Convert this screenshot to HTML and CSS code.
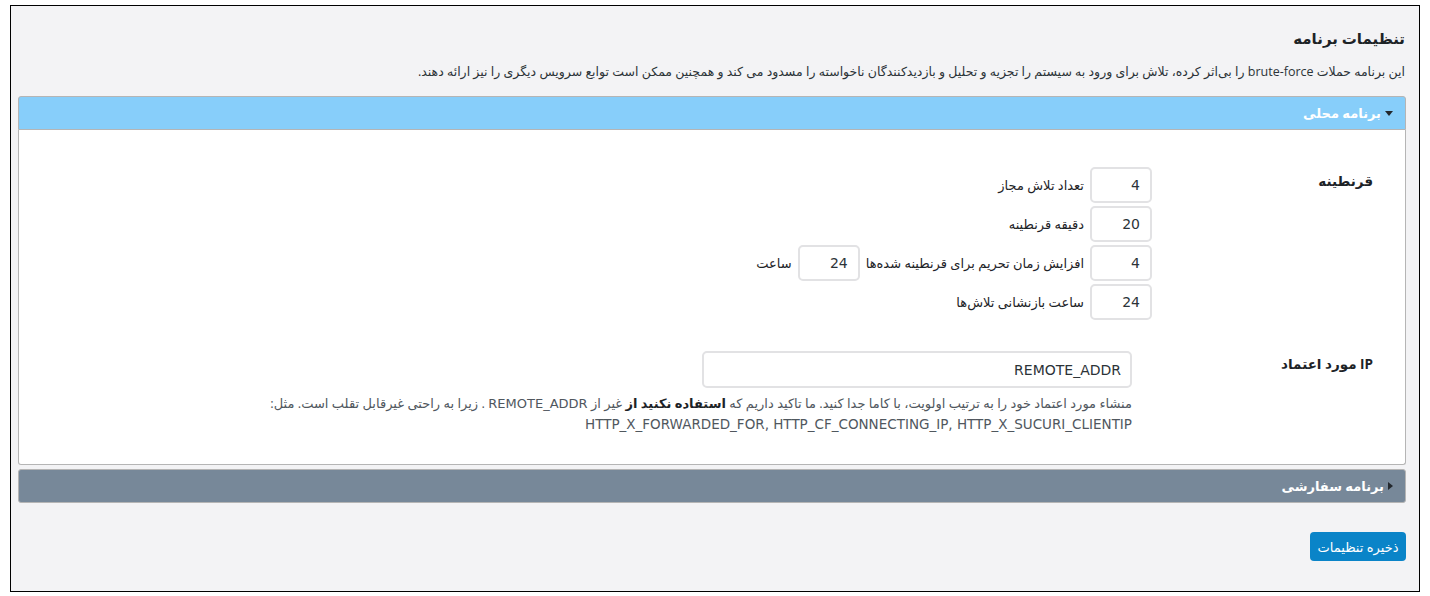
FILE: index.html
```html
<!DOCTYPE html>
<html lang="fa" dir="rtl">
<head>
<meta charset="utf-8">
<title>تنظیمات برنامه</title>
<link rel="stylesheet" href="styles.css">
</head>
<body>
<div class="wrap">
  <h1 class="title">تنظیمات برنامه</h1>
  <p class="desc">این برنامه حملات brute-force را بی‌اثر کرده، تلاش برای ورود به سیستم را تجزیه و تحلیل و بازدیدکنندگان ناخواسته را مسدود می کند و همچنین ممکن است توابع سرویس دیگری را نیز ارائه دهند.</p>

  <div class="panel panel-open">
    <div class="panel-head head-blue">
      <svg class="caret" width="8" height="5" viewBox="0 0 8 5"><path d="M0 0H8L4 5Z" fill="#23282d"/></svg>
      <span>برنامه محلی</span>
    </div>
    <div class="panel-body">
      <div class="row">
        <div class="label">قرنطینه</div>
        <div class="field">
          <div class="line"><input class="num" type="text" value="4"><span class="txt">تعداد تلاش مجاز</span></div>
          <div class="line"><input class="num" type="text" value="20"><span class="txt">دقیقه قرنطینه</span></div>
          <div class="line"><input class="num" type="text" value="4"><span class="txt">افزایش زمان تحریم برای قرنطینه شده‌ها</span><input class="num" type="text" value="24"><span class="txt">ساعت</span></div>
          <div class="line"><input class="num" type="text" value="24"><span class="txt">ساعت بازنشانی تلاش‌ها</span></div>
        </div>
      </div>
      <div class="row row-ip">
        <div class="label">IP مورد اعتماد</div>
        <div class="field field-ip">
          <input class="wide" type="text" value="REMOTE_ADDR">
          <p class="help">منشاء مورد اعتماد خود را به ترتیب اولویت، با کاما جدا کنید. ما تاکید داریم که <b>استفاده نکنید از</b> غیر از <span class="lat">REMOTE_ADDR</span> . زیرا به راحتی غیرقابل تقلب است. مثل:<br><span class="lat lat-list">HTTP_X_FORWARDED_FOR, HTTP_CF_CONNECTING_IP, HTTP_X_SUCURI_CLIENTIP</span></p>
        </div>
      </div>
    </div>
  </div>

  <div class="panel panel-closed">
    <div class="panel-head head-grey">
      <svg class="caret" width="5" height="8" viewBox="0 0 5 8"><path d="M0 0V8L5 4Z" fill="#23282d"/></svg>
      <span>برنامه سفارشی</span>
    </div>
  </div>

  <div class="actions">
    <button class="save" type="button">ذخیره تنظیمات</button>
  </div>
</div>
</body>
</html>
```
FILE: styles.css
```css
* { box-sizing: border-box; }
html, body { margin: 0; padding: 0; background: #fff; }
body {
  font-family: "Open Sans", "DejaVu Sans", sans-serif;
  color: #1d2327;
  font-size: 13px;
}
.wrap {
  margin: 5px 10px 0 10px;
  height: 587px;
  border: 1px solid #000;
  background: #f3f3f5;
  padding: 0 13px 0 7px;
}
.title {
  margin: 0;
  padding-top: 20px;
  font-size: 15px;
  font-weight: bold;
  line-height: 24px;
  color: #1d2327;
  padding-right: 1px;
}
.desc {
  margin: 12px 0 0 0;
  line-height: 20px;
  font-size: 12.5px;
  color: #2c3338;
  padding-right: 1px;
}
.panel { margin-top: 14px; }
.panel-closed { margin-top: 4px; }
.panel-head {
  height: 34px;
  border: 1px solid #b5b5b5;
  border-radius: 3px 3px 0 0;
  display: flex;
  align-items: center;
  padding-right: 12px;
  gap: 4px;
  color: #fff;
  font-weight: bold;
  font-size: 13px;
}
.head-blue { background: #87cefa; }
.head-grey { background: #778899; border-radius: 3px; height: 34px; }
.caret { flex: none; }
.panel-body {
  background: #fff;
  border: 1px solid #b5b5b5;
  border-top: none;
  border-radius: 0 0 3px 3px;
  padding: 37px 32px 30px 20px;
}
.row {
  display: grid;
  grid-template-columns: 221px 1fr;
}
.row-ip { margin-top: 28px; }
.label {
  font-weight: bold;
  font-size: 13.5px;
  line-height: 20px;
  padding-top: 4px;
}
.row-ip .label { padding-top: 3px; }
.line {
  display: flex;
  align-items: center;
  height: 36px;
  margin-bottom: 3px;
}
.num {
  width: 62px;
  height: 36px;
  border: 2px solid #e2e2e4;
  border-radius: 5px;
  background: #fff;
  font-family: "DejaVu Sans", sans-serif;
  font-size: 14px;
  color: #2c3338;
  padding: 0 10px;
  text-align: right;
  direction: ltr;
  margin: 0;
}
.txt {
  font-size: 13px;
  margin: 0 6px;
  color: #1d2327;
}
.field-ip { padding-right: 20px; }
.wide {
  display: block;
  width: 430px;
  height: 37px;
  border: 2px solid #e2e2e4;
  border-radius: 5px;
  background: #fff;
  font-family: "DejaVu Sans", sans-serif;
  font-size: 14px;
  color: #2c3338;
  padding: 0 9px;
  text-align: right;
  margin: 0;
}
.help {
  margin: 5px 0 0 0;
  font-size: 13px;
  line-height: 20px;
  color: #50575e;
}
.help b { color: #1d2327; }
.lat { font-family: "DejaVu Sans", sans-serif; font-size: 13px; }
.lat-list { font-size: 13.5px; }
.actions {
  margin-top: 29px;
  display: flex;
}
.save {
  height: 29px;
  width: 96px;
  border: none;
  border-radius: 4px;
  background: #0a84c8;
  color: #fff;
  font-family: inherit;
  font-size: 13px;
  padding: 0;
}
```
